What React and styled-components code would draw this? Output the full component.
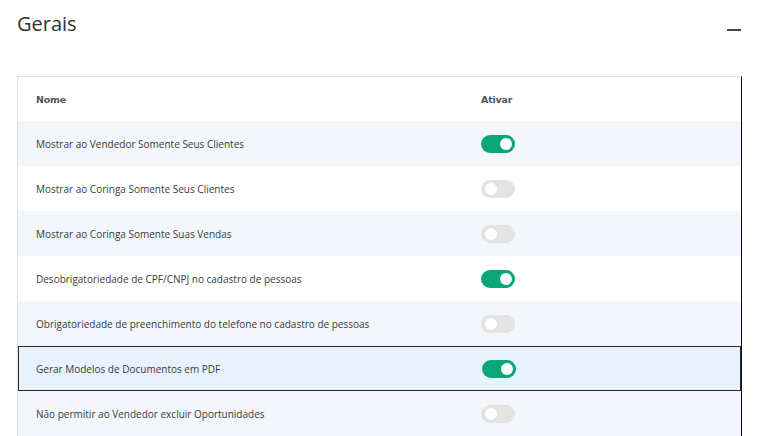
import React from "react";
import styled, { createGlobalStyle } from "styled-components";

const Global = createGlobalStyle`
  html, body { margin: 0; padding: 0; background: #fff; }
  body { font-family: "Open Sans", "Liberation Sans", sans-serif; overflow: hidden; }
`;

const Page = styled.div`
  padding: 0 16px 0 17px;
`;

const TitleBar = styled.div`
  display: flex;
  align-items: center;
  justify-content: space-between;
  height: 50px;
  padding-right: 0;
`;

const Title = styled.h2`
  margin: 0;
  font-size: 20px;
  font-weight: 400;
  color: #333;
  line-height: 1;
  position: relative;
  top: -1px;
`;

const Collapse = styled.div`
  width: 14px;
  height: 2px;
  background: #444;
  margin-right: 1px;
  margin-top: 10px;
`;

const Table = styled.div`
  margin-top: 26px;
  border-top: 1px solid #dcdfe4;
  border-left: 1px solid #dcdfe4;
  border-right: 1px solid #111;
`;

const Row = styled.div`
  display: grid;
  grid-template-columns: 444px 1fr;
  align-items: center;
  height: ${(p) => (p.$header ? 44 : 45)}px;
  box-sizing: border-box;
  background: ${(p) => (p.$active ? "#e8f2fd" : p.$alt ? "#f3f6fb" : "#fff")};
  border: ${(p) => (p.$active ? "1px solid #2b2b2b" : "none")};
  margin-left: ${(p) => (p.$active ? "0" : "0")};
`;

const Cell = styled.div`
  padding-left: ${(p) => (p.$active ? 17 : 18)}px;
  font-size: 10px;
  color: #3a3a3a;
  white-space: nowrap;
`;

const HeadCell = styled.div`
  padding-left: 18px;
  font-family: "DejaVu Sans", "Liberation Sans", sans-serif;
  font-size: 9.5px;
  font-weight: 700;
  color: #555;
  letter-spacing: -0.2px;
`;

const ToggleCell = styled.div`
  padding-left: ${(p) => (p.$active ? 19 : 19)}px;
  display: flex;
  align-items: center;
`;

const Toggle = styled.div`
  width: 34px;
  height: 18px;
  border-radius: 9px;
  background: ${(p) => (p.$on ? "#0aa578" : "#e3e3e3")};
  position: relative;
  &::after {
    content: "";
    position: absolute;
    top: 3px;
    left: ${(p) => (p.$on ? "19px" : "4px")};
    width: 12px;
    height: 12px;
    border-radius: 50%;
    background: #fff;
  }
`;

const rows = [
  { label: "Mostrar ao Vendedor Somente Seus Clientes", on: true },
  { label: "Mostrar ao Coringa Somente Seus Clientes", on: false },
  { label: "Mostrar ao Coringa Somente Suas Vendas", on: false },
  { label: "Desobrigatoriedade de CPF/CNPJ no cadastro de pessoas", on: true },
  { label: "Obrigatoriedade de preenchimento do telefone no cadastro de pessoas", on: false },
  { label: "Gerar Modelos de Documentos em PDF", on: true, active: true },
  { label: "Não permitir ao Vendedor excluir Oportunidades", on: false },
];

export default function App() {
  return (
    <Page>
      <Global />
      <TitleBar>
        <Title>Gerais</Title>
        <Collapse />
      </TitleBar>
      <Table>
        <Row $header>
          <HeadCell>Nome</HeadCell>
          <HeadCell style={{ paddingLeft: 19 }}>Ativar</HeadCell>
        </Row>
        {rows.map((r, i) => (
          <Row key={i} $alt={i % 2 === 0} $active={r.active}>
            <Cell $active={r.active}>{r.label}</Cell>
            <ToggleCell $active={r.active}>
              <Toggle $on={r.on} />
            </ToggleCell>
          </Row>
        ))}
      </Table>
    </Page>
  );
}
